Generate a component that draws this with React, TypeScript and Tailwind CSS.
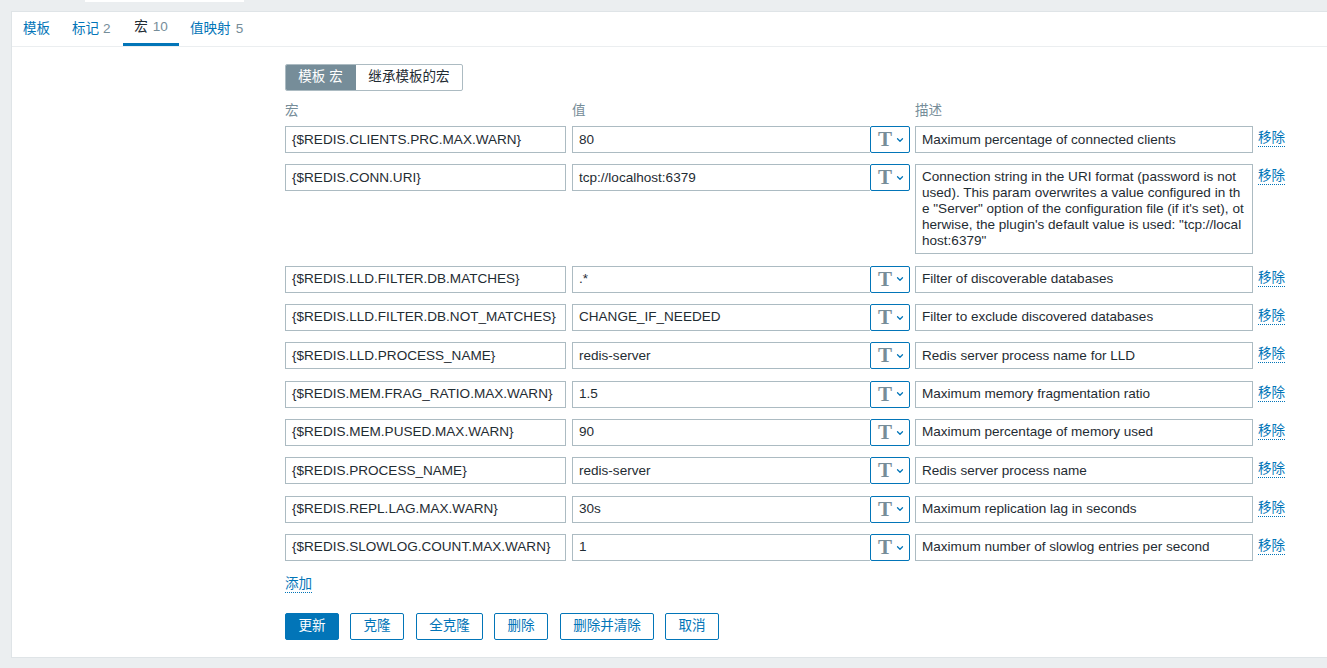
import { ChevronDown } from "lucide-react";

const rows = [
  ["{$REDIS.CLIENTS.PRC.MAX.WARN}", "80", "Maximum percentage of connected clients"],
  ["{$REDIS.CONN.URI}", "tcp://localhost:6379", null],
  ["{$REDIS.LLD.FILTER.DB.MATCHES}", ".*", "Filter of discoverable databases"],
  ["{$REDIS.LLD.FILTER.DB.NOT_MATCHES}", "CHANGE_IF_NEEDED", "Filter to exclude discovered databases"],
  ["{$REDIS.LLD.PROCESS_NAME}", "redis-server", "Redis server process name for LLD"],
  ["{$REDIS.MEM.FRAG_RATIO.MAX.WARN}", "1.5", "Maximum memory fragmentation ratio"],
  ["{$REDIS.MEM.PUSED.MAX.WARN}", "90", "Maximum percentage of memory used"],
  ["{$REDIS.PROCESS_NAME}", "redis-server", "Redis server process name"],
  ["{$REDIS.REPL.LAG.MAX.WARN}", "30s", "Maximum replication lag in seconds"],
  ["{$REDIS.SLOWLOG.COUNT.MAX.WARN}", "1", "Maximum number of slowlog entries per second"],
];

const longLines = [
  "Connection string in the URI format (password is not",
  "used). This param overwrites a value configured in th",
  'e "Server" option of the configuration file (if it\'s set), ot',
  "herwise, the plugin's default value is used: \"tcp://local",
  'host:6379"',
];

const field = "h-[27px] border border-[#acbbc2] bg-white px-[6px] flex items-center whitespace-nowrap overflow-hidden";

function Row({ r }: { r: (string | null)[] }) {
  return (
    <div className="flex items-start">
      <div className={`${field} w-[281px] shrink-0`}>{r[0]}</div>
      <div className="flex w-[338px] shrink-0 ml-[6px]">
        <div className={`${field} flex-1 border-r-0`}>{r[1]}</div>
        <div className="h-[27px] w-[40px] shrink-0 border border-[#0275b8] rounded-[2px] bg-white flex items-center pl-[7px]">
          <span className="font-['Liberation_Serif',serif] font-bold text-[21px] leading-none text-[#768d99]">T</span>
          <ChevronDown className="w-[10px] h-[10px] ml-[3px] text-[#0275b8]" strokeWidth={3} />
        </div>
      </div>
      {r[2] ? (
        <div className={`${field} w-[338px] shrink-0 ml-[5px]`}>{r[2]}</div>
      ) : (
        <div className="w-[338px] h-[90px] shrink-0 ml-[5px] border border-[#acbbc2] bg-white px-[6px] pt-[4px] leading-[15.9px] whitespace-nowrap">
          {longLines.map((l) => (
            <div key={l}>{l}</div>
          ))}
        </div>
      )}
      <span className="ml-[5px] mt-[4px] leading-[16px] text-[#0275b8] border-b border-dotted border-[#0275b8]">移除</span>
    </div>
  );
}

function Btn({ w, label, primary }: { w: string; label: string; primary?: boolean }) {
  return (
    <button
      className={`${w} h-[27px] rounded-[2px] border border-[#0275b8] flex items-center justify-center ${
        primary ? "bg-[#0275b8] text-white" : "bg-white text-[#0275b8]"
      }`}
    >
      {label}
    </button>
  );
}

export default function App() {
  return (
    <div className="h-[668px] overflow-hidden bg-[#ebeef0] text-[13.55px] text-[#1f2c33] font-['Liberation_Sans','Noto_Sans_CJK_SC',sans-serif]">
      <div className="ml-[85px] w-[159px] h-[2px] bg-white" />
      <div className="mt-[9px] ml-[11px] h-[647px] bg-white border-t border-l border-b border-[#dfe4e7]">
        <div className="h-[35px] flex border-b border-[#ebeef0] pl-[11px]">
          <div className="h-[34px] w-[49px] flex items-center text-[#0275b8]">模板</div>
          <div className="h-[34px] w-[51px] flex items-center text-[#0275b8]">
            标记<span className="text-[#768d99] ml-[4px]">2</span>
          </div>
          <div className="h-[34px] w-[56px] flex items-center justify-center border-b-[3px] border-[#0275b8]">
            宏<span className="text-[#768d99] ml-[5px]">10</span>
          </div>
          <div className="h-[34px] flex items-center ml-[11px] text-[#0275b8]">
            值映射<span className="text-[#768d99] ml-[5px]">5</span>
          </div>
        </div>
        <div className="pl-[273px] pt-[17px]">
          <div className="flex w-[178px] h-[27px] border border-[#acbbc2] rounded-[2px] overflow-hidden">
            <div className="w-[71px] -ml-px -my-px bg-[#768d99] text-white flex items-center justify-center">模板 宏</div>
            <div className="flex-1 flex items-center justify-center">继承模板的宏</div>
          </div>
          <div className="flex mt-[8px] h-[24px] items-center text-[#768d99]">
            <div className="w-[287px]">宏</div>
            <div className="w-[343px]">值</div>
            <div>描述</div>
          </div>
          <div className="flex flex-col gap-y-[11.33px] mt-[3.17px]">
            {rows.map((r) => (
              <Row key={r[0]} r={r} />
            ))}
          </div>
          <div className="mt-[12.83px] h-[19px]">
            <span className="inline-block leading-[16px] text-[#0275b8] border-b border-dotted border-[#0275b8]">添加</span>
          </div>
          <div className="flex mt-[20px]">
            <Btn w="w-[54px]" label="更新" primary />
            <div className="w-[11px]" />
            <Btn w="w-[54px]" label="克隆" />
            <div className="w-[12px]" />
            <Btn w="w-[67px]" label="全克隆" />
            <div className="w-[11px]" />
            <Btn w="w-[54px]" label="删除" />
            <div className="w-[12px]" />
            <Btn w="w-[94px]" label="删除并清除" />
            <div className="w-[11px]" />
            <Btn w="w-[54px]" label="取消" />
          </div>
        </div>
      </div>
    </div>
  );
}
